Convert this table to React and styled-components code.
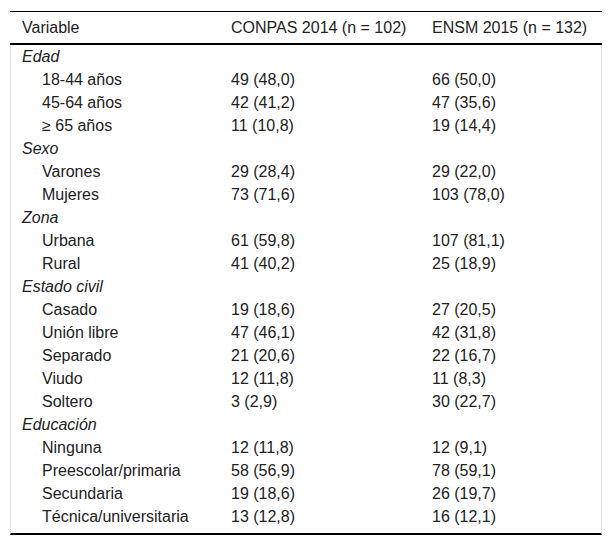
import React from "react";
import styled, { createGlobalStyle } from "styled-components";

const Global = createGlobalStyle`
  html, body { margin: 0; padding: 0; background: #fff; }
  body { font-family: "Liberation Sans", Arial, sans-serif; }
`;

const Page = styled.div`
  padding: 11px 10px 0 10px;
`;

const Table = styled.div`
  width: 592px;
  color: #222;
  font-size: 16px;
`;

const Head = styled.div`
  display: grid;
  grid-template-columns: 221px 201px 1fr;
  height: 31px;
  align-items: center;
  border-top: 1px solid #000;
  border-bottom: 2px solid #000;
  box-sizing: content-box;
`;

const HeadCell = styled.div`
  padding-left: ${(p) => (p.$first ? "12px" : "0")};
  padding-top: 1px;
  white-space: nowrap;
`;

const Body = styled.div`
  border-left: 1px solid #e4e4e4;
  border-right: 1px solid #e4e4e4;
  border-bottom: 2px solid #000;
  padding-bottom: 5px;
`;

const Row = styled.div`
  display: grid;
  grid-template-columns: 220px 201px 1fr;
  height: 23px;
  line-height: 23px;
  white-space: nowrap;
`;

const Label = styled.div`
  padding-left: ${(p) => (p.$group ? "11px" : "31px")};
  font-style: ${(p) => (p.$group ? "italic" : "normal")};
`;

const Cell = styled.div``;

const data = [
  { g: "Edad" },
  ["18-44 años", "49 (48,0)", "66 (50,0)"],
  ["45-64 años", "42 (41,2)", "47 (35,6)"],
  ["≥ 65 años", "11 (10,8)", "19 (14,4)"],
  { g: "Sexo" },
  ["Varones", "29 (28,4)", "29 (22,0)"],
  ["Mujeres", "73 (71,6)", "103 (78,0)"],
  { g: "Zona" },
  ["Urbana", "61 (59,8)", "107 (81,1)"],
  ["Rural", "41 (40,2)", "25 (18,9)"],
  { g: "Estado civil" },
  ["Casado", "19 (18,6)", "27 (20,5)"],
  ["Unión libre", "47 (46,1)", "42 (31,8)"],
  ["Separado", "21 (20,6)", "22 (16,7)"],
  ["Viudo", "12 (11,8)", "11 (8,3)"],
  ["Soltero", "3 (2,9)", "30 (22,7)"],
  { g: "Educación" },
  ["Ninguna", "12 (11,8)", "12 (9,1)"],
  ["Preescolar/primaria", "58 (56,9)", "78 (59,1)"],
  ["Secundaria", "19 (18,6)", "26 (19,7)"],
  ["Técnica/universitaria", "13 (12,8)", "16 (12,1)"],
];

export default function App() {
  return (
    <Page>
      <Global />
      <Table>
        <Head>
          <HeadCell $first>Variable</HeadCell>
          <HeadCell>CONPAS 2014 (n = 102)</HeadCell>
          <HeadCell>ENSM 2015 (n = 132)</HeadCell>
        </Head>
        <Body>
          {data.map((r, i) =>
            Array.isArray(r) ? (
              <Row key={i}>
                <Label>{r[0]}</Label>
                <Cell>{r[1]}</Cell>
                <Cell>{r[2]}</Cell>
              </Row>
            ) : (
              <Row key={i}>
                <Label $group>{r.g}</Label>
                <Cell />
                <Cell />
              </Row>
            )
          )}
        </Body>
      </Table>
    </Page>
  );
}
